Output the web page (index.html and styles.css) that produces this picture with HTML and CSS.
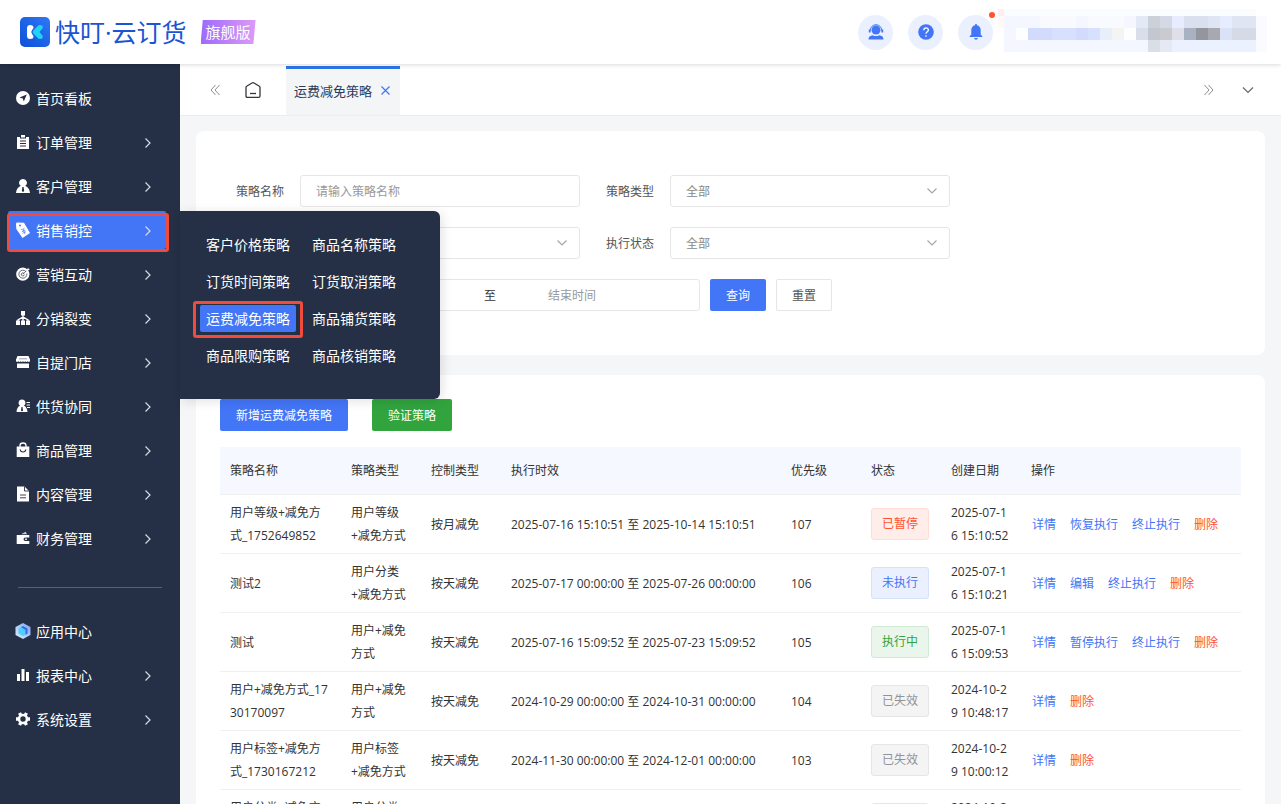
FILE: index.html
```html
<!DOCTYPE html>
<html lang="zh-CN">
<head>
    <meta charset="UTF-8">
    <meta name="viewport" content="width=device-width, initial-scale=1.0">
    <title>运费减免策略</title>
    <link rel="stylesheet" href="styles.css">
</head>
<body>
    <svg class="sprite" aria-hidden="true">
        <symbol id="arrow" viewBox="0 0 8 12"><path d="M1.500 2.500L6 7l-4.500 4.500" fill="none" stroke="#d8dbe2" stroke-width="1.200"/></symbol>
    </svg>

    <header class="header">
        <svg class="logo" viewBox="0 0 30 30">
            <defs>
                <linearGradient id="logoBg" x1="1" y1="0" x2="0" y2="1">
                    <stop offset="0" stop-color="#2f78f4"/>
                    <stop offset="1" stop-color="#0c50d8"/>
                </linearGradient>
                <linearGradient id="cube" x1="0" y1="1" x2="1" y2="0">
                    <stop offset="0" stop-color="#e3efff"/>
                    <stop offset="1" stop-color="#7ea2f0"/>
                </linearGradient>
            </defs>
            <rect width="30" height="30" rx="5" fill="url(#logoBg)"/>
            <path d="M10 8q3.500 0 3.500 2.500 0 1-1.500 2.500-1.500 2 0 4 1.500 1.500 1.500 2.500Q13.500 22 10 22q-3 0-3-3.500v-7Q7 8 10 8z" fill="#fff"/>
            <path d="M20 8q3.200.2 2.800 3L19.500 15l3.300 4q.4 2.800-2.800 3-1.300 0-2.500-1.300l-4.200-4.200q-1.300-1.500 0-3l4.200-4.200Q18.700 8 20 8z" fill="#1fd3f5"/>
        </svg>
        <span class="brand">快叮·云订货</span>
        <span class="edition">旗舰版</span>
        <div class="header-tools">
            <button class="round" aria-label="客服">
                <svg viewBox="0 0 16 16" fill="#4375f7">
                    <circle cx="8" cy="6" r="4.500"/>
                    <path d="M2.200 6.500a5.800 5.800 0 0 1 11.600 0" fill="none" stroke="#4375f7"/>
                    <path d="M.8 5.500h1.800v3H.8zM13.400 5.500h1.800v3h-1.800zM.5 15.500c0-2.500 1.500-4 4.300-4.300Q8 13 11.200 11.200c2.800.3 4.300 1.800 4.300 4.300z"/>
                </svg>
            </button>
            <button class="round" aria-label="帮助">
                <svg viewBox="0 0 16 16">
                    <circle cx="8" cy="8" r="7.800" fill="#4375f7"/>
                    <path d="M5.800 6.200c0-3 4.600-2.900 4.600-.2C10.400 7.800 8 7.800 8 9.800M8 11.200v1.500" fill="none" stroke="#fff" stroke-width="1.300"/>
                </svg>
            </button>
            <button class="round" aria-label="消息">
                <svg viewBox="0 0 16 16" fill="#4375f7">
                    <path d="M7.200 0h1.600v1.300c2.600.5 3.900 2.300 3.900 5v4.200l1.600 1.700v.8H1.700v-.8l1.600-1.700V6.300c0-2.700 1.300-4.500 3.900-5zM6 14h4q-.4 1.800-2 1.800T6 14z"/>
                </svg>
                <i class="dot"></i>
            </button>
            <svg class="account" viewBox="0 0 269 46" shape-rendering="crispEdges">
                <path d="M0 0h6v7H0z" fill="#ffefec"/><path d="M0 7h6v12H0z" fill="#fff8f7"/>
                <path d="M6 0h252v7H6z" fill="#fbfcfd"/>
                <path d="M6 7h252v36H6z" fill="#f4f7ff"/><path d="M258 7h11v36h-11z" fill="#f9fbff"/>
                <path d="M42 7h36v12H42zM90 7h36v12H90z" fill="#f9fafd"/>
                <path d="M18 19h12v12H18zM126 19h12v12h-12z" fill="#fdfeff"/>
                <path d="M30 19h24v12H30zM78 19h12v12H78z" fill="#d2dbfc"/>
                <path d="M54 19h24v12H54zM90 19h12v12H90z" fill="#d7e1fe"/>
                <path d="M102 19h12v12H102z" fill="#e8effa"/><path d="M114 19h12v12h-12z" fill="#f4f4f3"/>
                <path d="M138 7h12v12h-12z" fill="#e4eaf5"/><path d="M150 7h12v12h-12z" fill="#cbd0d9"/><path d="M162 7h12v12h-12z" fill="#d4d9e5"/>
                <path d="M174 7h12v12h-12zM222 7h12v12h-12z" fill="#e7edff"/>
                <path d="M186 7h24v12h-24z" fill="#dbe0ef"/><path d="M210 7h12v12h-12zM234 7h24v12h-24z" fill="#e0e5f3"/>
                <path d="M138 19h12v12h-12z" fill="#dadeea"/><path d="M150 19h12v12h-12z" fill="#c3c7d0"/><path d="M162 19h12v12h-12z" fill="#c9cbd1"/>
                <path d="M174 19h12v12h-12z" fill="#dfdfe7"/><path d="M186 19h12v12h-12z" fill="#a9b2c2"/><path d="M198 19h12v12h-12z" fill="#93969f"/>
                <path d="M210 19h12v12h-12z" fill="#a8a8b0"/><path d="M222 19h12v12h-12z" fill="#d9e2f6"/><path d="M234 19h24v12h-24z" fill="#d6dae6"/>
                <path d="M150 31h12v12h-12z" fill="#dadfe7"/><path d="M162 31h12v12h-12z" fill="#e4e9f4"/><path d="M174 31h84v12h-84z" fill="#ecf1ff"/>
            </svg>
        </div>
    </header>

    <div class="layout">
        <nav class="sidebar">
            <ul class="menu">
                <li><a href="#"><svg class="icon" viewBox="0 0 14 14"><circle cx="7" cy="7" r="7" fill="#fff"/><path d="M10.800 3.500L7.800 10.500 6.800 7.600 3.500 6.500z" fill="#252f45"/></svg>首页看板</a></li>
                <li><a href="#"><svg class="icon" viewBox="0 0 14 14"><path d="M1 2h3v1.500h6V2h3v12H1zM5 0h4v2.500H5z" fill="#fff"/><path d="M4 6h6M4 8.500h6M4 11h6" stroke="#252f45"/></svg>订单管理<svg class="arrow"><use href="#arrow"/></svg></a></li>
                <li><a href="#"><svg class="icon" viewBox="0 0 14 14"><path d="M7 0a3.700 3.700 0 0 1 2.200 6.800C12 8 13.700 10.500 14 14H0C.3 10.500 2 8 4.800 6.800A3.700 3.700 0 0 1 7 0z" fill="#fff"/><path d="M6.400 8h1.200l.6 4L7 13l-1.200-1z" fill="#252f45"/></svg>客户管理<svg class="arrow"><use href="#arrow"/></svg></a></li>
                <li>
                    <a href="#" class="active"><svg class="icon" viewBox="0 0 14 14"><path d="M0 .7Q0-.6 1.500-.6L8-.3l6 10.300-7.500 5L.3 6z" fill="#fff"/><circle cx="4" cy="2.500" r="1" fill="#4375f7"/><path d="M5 6.200l2.500 1L8 5M7.500 7.200l1.500 4M5.800 8.800l3.400-1.600M6.500 10.300l3.400-1.600" stroke="#4375f7" stroke-width=".7" fill="none"/></svg>销售销控<svg class="arrow"><use href="#arrow"/></svg></a>
                    <i class="mark mark-menu"></i>
                    <div class="flyout">
                        <a href="#">客户价格策略</a>
                        <a href="#">商品名称策略</a>
                        <a href="#">订货时间策略</a>
                        <a href="#">订货取消策略</a>
                        <a href="#" class="active">运费减免策略<i class="mark mark-sub"></i></a>
                        <a href="#">商品铺货策略</a>
                        <a href="#">商品限购策略</a>
                        <a href="#">商品核销策略</a>
                    </div>
                </li>
                <li><a href="#"><svg class="icon" viewBox="0 0 14 14"><circle cx="6.800" cy="7.200" r="6.600" fill="#fff"/><path d="M9.800 4.500a4 4 0 1 0 1 2M8 6.500a1.500 1.500 0 1 0 .3 1M7 7.200L12.500 1.500" fill="none" stroke="#252f45" stroke-width=".7"/><path d="M10 3.500L12.500.5V2h1.500l-3 2.500z" fill="#fff"/></svg>营销互动<svg class="arrow"><use href="#arrow"/></svg></a></li>
                <li><a href="#"><svg class="icon" viewBox="0 0 14 14"><path d="M5 0h4v4.500H5zM0 9.500h4V14H0zM5 9.500h4V14H5zM10 9.500h4V14h-4z" fill="#fff"/><path d="M7 4v6M2 10V9l5-3 5 3v1" fill="none" stroke="#fff" stroke-width="1.400"/></svg>分销裂变<svg class="arrow"><use href="#arrow"/></svg></a></li>
                <li><a href="#"><svg class="icon" viewBox="0 0 14 14"><path d="M1.500 1h11L14 4.500v1.700q-1.200 1.500-2.400 0-1.200 1.500-2.300 0-1.200 1.500-2.300 0-1.200 1.500-2.300 0-1.200 1.500-2.300 0Q1.200 7.700 0 6.200V4.500zM1 8.500h12V13H1z" fill="#fff"/><path d="M3 3.800h8" stroke="#9aa0ad"/></svg>自提门店<svg class="arrow"><use href="#arrow"/></svg></a></li>
                <li><a href="#"><svg class="icon" viewBox="0 0 14 14"><path d="M6 .5a3.400 3.400 0 0 1 2 6.200c2 .8 3.300 3 3.500 6.300H.5C.7 9.700 2 7.500 4 6.700A3.400 3.400 0 0 1 6 .5z" fill="#fff"/><path d="M5.500 8h1l.5 3.500-1 1-1-1z" fill="#252f45"/><path d="M10.500 3.500H14M10.500 6H14M11 8.500h3" stroke="#fff" stroke-width="1.200"/></svg>供货协同<svg class="arrow"><use href="#arrow"/></svg></a></li>
                <li><a href="#"><svg class="icon" viewBox="0 0 14 14"><path d="M.7 3.500h12.600V14H.7z" fill="#fff"/><path d="M4 4V2.500a3 2.500 0 0 1 6 0V4" fill="none" stroke="#fff" stroke-width="1.300"/><path d="M4.200 6.500q.3 2.500 2.800 2.500t2.800-2.500" fill="none" stroke="#252f45" stroke-width="1.200"/></svg>商品管理<svg class="arrow"><use href="#arrow"/></svg></a></li>
                <li><a href="#"><svg class="icon" viewBox="0 0 14 14"><path d="M1-.5h7.500L13 4v10.500H1z" fill="#fff"/><path d="M8.500-.5V4H13M4 8h6M4 10.800h6" fill="none" stroke="#252f45" stroke-width=".9"/></svg>内容管理<svg class="arrow"><use href="#arrow"/></svg></a></li>
                <li><a href="#"><svg class="icon" viewBox="0 0 14 14"><path d="M.7 4h12.600v2.500H9.500q-2 0-2 1.700t2 1.700h3.800V13H.7z" fill="#fff"/><path d="M5 3.300L9.500.8l1.600 2.500z" fill="#c9ccd4"/><circle cx="10" cy="8.200" r=".9" fill="#fff"/></svg>财务管理<svg class="arrow"><use href="#arrow"/></svg></a></li>
            </ul>
            <hr class="divider">
            <ul class="menu">
                <li><a href="#"><svg class="icon" viewBox="0 0 14 14"><path d="M7-1l7.500 4v8L7 15l-7.500-4V3z" fill="url(#cube)"/><path d="M7 2l4.500 2.500v5L7 12 2.500 9.500v-5z" fill="#4fd0fa"/><path d="M5 3.200L7 2l4.500 2.500v5L9.500 10.700V6z" fill="#3d67e8"/></svg>应用中心</a></li>
                <li><a href="#"><svg class="icon" viewBox="0 0 14 14"><path d="M1 6h3v7H1zM5.500 1h3v12h-3zM10 4h3v9h-3z" fill="#fff"/></svg>报表中心<svg class="arrow"><use href="#arrow"/></svg></a></li>
                <li><a href="#"><svg class="icon" viewBox="0 0 14 14"><path d="M0 7h14M3.500 1l7 12M10.500 1l-7 12" stroke="#fff" stroke-width="3.400"/><circle cx="7" cy="7" r="4" fill="#252f45" stroke="#fff" stroke-width="2.600"/></svg>系统设置<svg class="arrow"><use href="#arrow"/></svg></a></li>
            </ul>
        </nav>

        <main class="main">
            <div class="tabs">
                <button class="tab-btn" aria-label="向左"><svg width="10" height="12" viewBox="0 0 10 12"><path d="M5.500 1L1 6l4.500 5M9.500 1L5 6l4.500 5" fill="none" stroke="#8c8f96"/></svg></button>
                <button class="tab-btn home" aria-label="首页"><svg width="16" height="16" viewBox="0 0 16 16"><path d="M1 5.500Q1 4.500 2 4l5-3q1-.6 2 0l5 3q1 .5 1 1.500V14q0 1.300-1.300 1.300H2.300Q1 15.300 1 14z" fill="none" stroke="#33373f" stroke-width="1.300"/><path d="M5 11.500h6" stroke="#33373f" stroke-width="1.300"/></svg></button>
                <div class="tab">
                    <a href="#">运费减免策略</a>
                    <button class="tab-close" aria-label="关闭"><svg width="9" height="9" viewBox="0 0 9 9"><path d="M.5.5l8 8M8.500.5l-8 8" stroke="#4375f7" stroke-width="1.200"/></svg></button>
                </div>
                <button class="tab-btn right" aria-label="向右"><svg width="10" height="12" viewBox="0 0 10 12"><path d="M.5 1L5 6 .5 11M4.500 1L9 6l-4.500 5" fill="none" stroke="#8c8f96"/></svg></button>
                <button class="tab-btn more" aria-label="更多"><svg width="12" height="8" viewBox="0 0 12 8"><path d="M1 1.500l5 5 5-5" fill="none" stroke="#66696f" stroke-width="1.200"/></svg></button>
            </div>

            <form class="card search">
                <div class="row">
                    <label for="name">策略名称</label>
                    <input class="control" id="name" type="text" placeholder="请输入策略名称">
                    <label for="type">策略类型</label>
                    <select class="control" id="type"><option>全部</option></select>
                </div>
                <div class="row">
                    <label for="control">控制类型</label>
                    <select class="control" id="control"><option>全部</option></select>
                    <label for="status">执行状态</label>
                    <select class="control" id="status"><option>全部</option></select>
                </div>
                <div class="row">
                    <label for="start">执行时间</label>
                    <div class="range">
                        <input id="start" type="text" placeholder="开始时间">
                        <span>至</span>
                        <input type="text" placeholder="结束时间" aria-label="结束时间">
                    </div>
                    <button type="button" class="btn primary">查询</button>
                    <button type="button" class="btn plain">重置</button>
                </div>
            </form>

            <section class="card list">
                <div class="actions">
                    <button class="btn primary">新增运费减免策略</button>
                    <button class="btn green">验证策略</button>
                </div>
                <table class="table">
                    <colgroup>
                        <col class="c-name"><col class="c-sm"><col class="c-sm"><col class="c-time"><col class="c-sm"><col class="c-sm"><col class="c-sm"><col>
                    </colgroup>
                    <thead>
                        <tr><th>策略名称</th><th>策略类型</th><th>控制类型</th><th>执行时效</th><th>优先级</th><th>状态</th><th>创建日期</th><th>操作</th></tr>
                    </thead>
                    <tbody>
                        <tr>
                            <td>用户等级+减免方式_1752649852</td><td>用户等级<br>+减免方式</td><td>按月减免</td>
                            <td>2025-07-16 15:10:51 至 2025-10-14 15:10:51</td><td>107</td>
                            <td><span class="tag paused">已暂停</span></td><td>2025-07-16 15:10:52</td>
                            <td><div class="ops"><a href="#">详情</a><a href="#">恢复执行</a><a href="#">终止执行</a><a href="#" class="del">删除</a></div></td>
                        </tr>
                        <tr>
                            <td>测试2</td><td>用户分类<br>+减免方式</td><td>按天减免</td>
                            <td>2025-07-17 00:00:00 至 2025-07-26 00:00:00</td><td>106</td>
                            <td><span class="tag waiting">未执行</span></td><td>2025-07-16 15:10:21</td>
                            <td><div class="ops"><a href="#">详情</a><a href="#">编辑</a><a href="#">终止执行</a><a href="#" class="del">删除</a></div></td>
                        </tr>
                        <tr>
                            <td>测试</td><td>用户+减免方式</td><td>按天减免</td>
                            <td>2025-07-16 15:09:52 至 2025-07-23 15:09:52</td><td>105</td>
                            <td><span class="tag running">执行中</span></td><td>2025-07-16 15:09:53</td>
                            <td><div class="ops"><a href="#">详情</a><a href="#">暂停执行</a><a href="#">终止执行</a><a href="#" class="del">删除</a></div></td>
                        </tr>
                        <tr>
                            <td>用户+减免方式_1730170097</td><td>用户+减免方式</td><td>按天减免</td>
                            <td>2024-10-29 00:00:00 至 2024-10-31 00:00:00</td><td>104</td>
                            <td><span class="tag">已失效</span></td><td>2024-10-29 10:48:17</td>
                            <td><div class="ops"><a href="#">详情</a><a href="#" class="del">删除</a></div></td>
                        </tr>
                        <tr>
                            <td>用户标签+减免方式_1730167212</td><td>用户标签<br>+减免方式</td><td>按天减免</td>
                            <td>2024-11-30 00:00:00 至 2024-12-01 00:00:00</td><td>103</td>
                            <td><span class="tag">已失效</span></td><td>2024-10-29 10:00:12</td>
                            <td><div class="ops"><a href="#">详情</a><a href="#" class="del">删除</a></div></td>
                        </tr>
                        <tr>
                            <td>用户分类+减免方式_1730166980</td><td>用户分类<br>+减免方式</td><td>按天减免</td>
                            <td>2024-10-29 00:00:00 至 2024-10-30 00:00:00</td><td>102</td>
                            <td><span class="tag">已失效</span></td><td>2024-10-29 09:56:20</td>
                            <td><div class="ops"><a href="#">详情</a><a href="#" class="del">删除</a></div></td>
                        </tr>
                    </tbody>
                </table>
            </section>
        </main>
    </div>
</body>
</html>
```
FILE: styles.css
```css
* {
    box-sizing: border-box;
}

body {
    display: flex;
    flex-direction: column;
    height: 100vh;
    margin: 0;
    overflow: hidden;
    font-family: "Open Sans", "Noto Sans CJK SC", sans-serif;
    font-size: 12px;
    color: #333;
    background-color: #f5f6f8;
}

a {
    text-decoration: none;
}

button, input, select {
    font-family: inherit;
    font-size: 12px;
}

button {
    padding: 0;
    border: none;
    background: none;
    cursor: pointer;
}

.sprite {
    position: absolute;
    width: 0;
    height: 0;
}

/* header */
.header {
    display: flex;
    align-items: center;
    flex: none;
    height: 64px;
    padding: 0 14px 0 20px;
    background-color: #fff;
    box-shadow: 0 1px 4px rgba(0, 0, 0, 0.15);
    position: relative;
    z-index: 3;
}

.logo {
    width: 30px;
    height: 30px;
}

.brand {
    margin-left: 5px;
    font-size: 25px;
    line-height: 30px;
    color: #1b55d5;
}

.edition {
    margin-left: 14px;
    width: 55px;
    font-size: 15px;
    line-height: 24px;
    text-align: center;
    color: #fff;
    background: linear-gradient(90deg, #9e6afb, #dc9bf6);
    clip-path: polygon(4% 0, 100% 0, 96% 100%, 0 100%);
}

.header-tools {
    display: flex;
    align-items: center;
    gap: 15px;
    margin-left: auto;
}

.round {
    display: flex;
    align-items: center;
    justify-content: center;
    position: relative;
    width: 35px;
    height: 35px;
    border-radius: 50%;
    background-color: #ebf0ff;
}

.round svg {
    width: 16px;
    height: 16px;
}

.dot {
    position: absolute;
    top: -3px;
    right: -2px;
    width: 6px;
    height: 6px;
    border-radius: 50%;
    background-color: #ff5230;
}

.account {
    width: 269px;
    height: 46px;
    margin-left: -10px;
}

/* sidebar */
.layout {
    display: flex;
    flex: 1;
    min-height: 0;
}

.sidebar {
    flex: none;
    width: 180px;
    padding-top: 13px;
    background-color: #252f45;
    position: relative;
    z-index: 2;
}

.menu {
    list-style: none;
    margin: 0;
    padding: 0;
}

.menu li {
    height: 44px;
    padding: 2px 14px 4px 8px;
    position: relative;
}

.menu li > a {
    display: flex;
    align-items: center;
    height: 38px;
    padding: 0 14px 0 8px;
    font-size: 14px;
    color: #fff;
    border-radius: 2px;
}

.icon {
    width: 14px;
    height: 14px;
    margin-right: 6px;
    overflow: visible;
}

.arrow {
    width: 8px;
    height: 12px;
    margin-left: auto;
}

.menu a.active {
    background-color: #4375f7;
}

.divider {
    width: 144px;
    height: 1px;
    margin: 26px auto 22px;
    border: none;
    background-color: #576072;
}

.flyout {
    position: absolute;
    left: 180px;
    top: 2px;
    display: grid;
    grid-template-columns: 96px 96px;
    gap: 10px;
    width: 260px;
    padding: 20px 20px 30px;
    background-color: #252f45;
    border-radius: 0 6px 6px 0;
    box-shadow: 2px 2px 12px rgba(0, 0, 0, 0.12);
}

.flyout a {
    position: relative;
    font-size: 14px;
    line-height: 27px;
    text-align: center;
    color: #fff;
    border-radius: 2px;
}

/* red frames */
.mark {
    position: absolute;
    border: 3px solid #f04b3c;
    border-radius: 3px;
}

.mark-menu {
    left: 7px;
    top: 4px;
    width: 162px;
    height: 39px;
}

.mark-sub {
    inset: -4px -7px -6px;
}

/* tabs */
.main {
    flex: 1;
    min-width: 0;
}

.tabs {
    display: flex;
    align-items: center;
    height: 52px;
    padding: 2px 27px 0 30px;
    background-color: #fff;
    border-bottom: 1px solid #ebedf0;
}

.tab-btn {
    display: flex;
    padding-bottom: 2px;
}

.home {
    margin: 0 25px;
}

.tab {
    display: flex;
    align-items: center;
    gap: 9px;
    height: 49px;
    padding: 0 10px 4px 8px;
    background-color: #f4f5f7;
    border-top: 3px solid #2d74e7;
}

.tab a {
    font-size: 13px;
    color: #2c3a5c;
}

.tab-close {
    display: flex;
}

.right {
    margin-left: auto;
}

.more {
    margin-left: 28px;
}

/* cards */
.card {
    margin: 15px 16px 20px;
    background-color: #fff;
    border-radius: 8px;
}

.search {
    display: flex;
    flex-direction: column;
    gap: 20px;
    padding: 44px 24px;
}

.row {
    display: flex;
    align-items: center;
    gap: 10px;
}

.row label {
    width: 64px;
    margin-right: 6px;
    text-align: right;
    color: #555;
}

.control {
    width: 280px;
    height: 32px;
    padding: 0 15px;
    border: 1px solid #e6e6e6;
    border-radius: 3px;
    background-color: #fff;
    color: #888;
}

select.control {
    appearance: none;
    background-image: url("data:image/svg+xml,%3Csvg xmlns='http://www.w3.org/2000/svg' width='10' height='6'%3E%3Cpath d='M.5.5L5 5 9.500.5' fill='none' stroke='%23a6a6a6' stroke-width='1.200'/%3E%3C/svg%3E");
    background-repeat: no-repeat;
    background-position: right 12px center;
}

input::placeholder {
    color: #999;
}

.range {
    display: flex;
    align-items: center;
    width: 400px;
    height: 32px;
    padding: 0 53px 0 33px;
    border: 1px solid #e6e6e6;
    border-radius: 3px;
}

.range input {
    flex: 1;
    min-width: 0;
    padding: 0;
    border: none;
    outline: none;
    text-align: center;
}

.range span {
    width: 16px;
    text-align: center;
}

.btn {
    height: 32px;
    padding: 0 16px;
    border-radius: 2px;
    color: #fff;
}

.primary {
    background-color: #4375f7;
}

.green {
    background-color: #31a43e;
}

.plain {
    padding: 0 15px;
    border: 1px solid #e6e6e6;
    color: #555;
}

.list {
    margin-bottom: 0;
    padding: 24px;
}

.actions {
    display: flex;
    gap: 24px;
    margin-bottom: 16px;
}

/* table */
.table {
    width: 100%;
    table-layout: fixed;
    border-collapse: separate;
    border-spacing: 0;
}

.c-name {
    width: 121px;
}

.c-sm {
    width: 80px;
}

.c-time {
    width: 280px;
}

.table th, .table td {
    padding: 6px 10px;
    line-height: 23px;
    text-align: left;
    font-weight: normal;
    word-break: break-all;
    border-bottom: 1px solid #f0f0f0;
}

.table th {
    padding: 12px 10px;
    background-color: #f5f8ff;
}

.tag {
    display: block;
    width: 58px;
    line-height: 30px;
    text-align: center;
    border: 1px solid #e6e6e8;
    border-radius: 3px;
    color: #909399;
    background-color: #f4f4f5;
}

.paused {
    color: #ff5230;
    background-color: #ffedea;
    border-color: #ffdcd5;
}

.waiting {
    color: #4375f7;
    background-color: #ebf0ff;
    border-color: #d6e1fd;
}

.running {
    color: #31a43e;
    background-color: #eaf6ec;
    border-color: #d0ebd4;
}

.ops {
    display: flex;
    gap: 14px;
    padding-left: 1px;
    white-space: nowrap;
}

.ops a {
    color: #4375f7;
}

.ops .del {
    color: #ff5230;
}
```
